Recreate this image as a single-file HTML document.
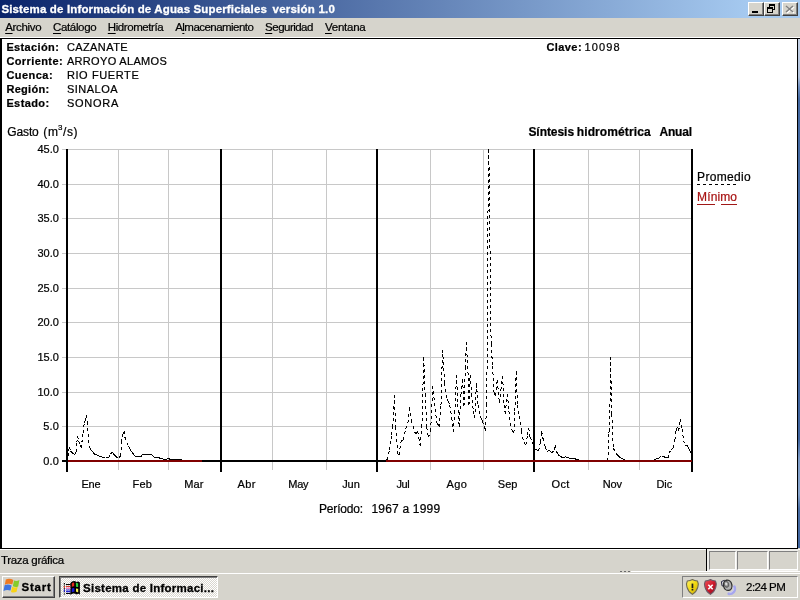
<!DOCTYPE html>
<html lang="es"><head><meta charset="utf-8"><title>Sistema de Información de Aguas Superficiales versión 1.0</title>
<style>
html,body{margin:0;padding:0;background:#d6d4cc;}
body{width:800px;height:600px;overflow:hidden;position:relative;font-family:"Liberation Sans",sans-serif;}
.tx{position:absolute;white-space:pre;line-height:1;font-size:11px;color:#000;-webkit-text-stroke:.22px currentColor;}
#txt{position:absolute;left:0;top:0;width:800px;height:600px;will-change:transform;pointer-events:none;}
.tx.ttl,.tx.tb{-webkit-text-stroke:.3px currentColor;}
.tx u{text-decoration:underline;text-underline-offset:2px;text-decoration-thickness:1px;}
#titlebar{position:absolute;left:0;top:0;width:800px;height:18px;background:linear-gradient(to right,#0a246a 0,#a6caf0 94%);}
.cb{position:absolute;top:2px;width:16px;height:14px;box-sizing:border-box;background:#d6d4cc;border:1px solid;border-color:#fff #404040 #404040 #fff;box-shadow:inset -1px -1px 0 #808080;}
#menubar{position:absolute;left:0;top:18px;width:800px;height:20px;background:#d6d4cc;border-bottom:1px solid #fff;box-sizing:border-box;}
#client{position:absolute;left:0;top:38px;width:798px;height:511px;box-sizing:border-box;background:#fff;border-style:solid;border-color:#000;border-width:1px 1px 1px 2px;}
#rstrip{position:absolute;left:798px;top:39px;width:2px;height:509px;background:linear-gradient(to bottom,#c6d2e6 0,#b0c2dc 38px,#6f8fc0 48px,#456aa2 60px,#3f649e 400px,#7d9cc8 420px,#86a4cc 455px,#4a6ea4 470px,#3f649e 509px);}
#chart{position:absolute;left:2px;top:39px;}
#statusbar{position:absolute;left:0;top:549px;width:800px;height:22px;background:#d6d4cc;border-top:1px solid #fff;box-sizing:border-box;}
.sp{position:absolute;top:551px;height:19px;box-sizing:border-box;background:#d6d4cc;border:1px solid;border-color:#808080 #fff #fff #808080;}
#taskbar{position:absolute;left:0;top:571px;width:800px;height:29px;background:#d6d4cc;}
#taskbar .hl{position:absolute;left:0;top:2px;width:800px;height:1px;background:#fff;}
#start{position:absolute;left:2px;top:576px;width:53px;height:22px;box-sizing:border-box;background:#d6d4cc;border:1px solid;border-color:#fff #404040 #404040 #fff;box-shadow:inset -1px -1px 0 #808080;}
#task{position:absolute;left:59px;top:576px;width:159px;height:22px;box-sizing:border-box;background-color:#ebe9e5;background-image:repeating-conic-gradient(#fff 0 25%,#d9d6cf 0 50%);background-size:2px 2px;border:1px solid;border-color:#404040 #fff #fff #404040;box-shadow:inset 1px 1px 0 #808080;}
#tray{position:absolute;left:682px;top:576px;width:116px;height:22px;box-sizing:border-box;border:1px solid;border-color:#808080 #fff #fff #808080;}
svg.ic{position:absolute;overflow:visible;}
</style></head>
<body>
<div id="titlebar">
<div class="cb" style="left:748px"><svg class="ic" style="left:3px;top:8px" width="6" height="2"><rect width="6" height="2" fill="#000"/></svg></div>
<div class="cb" style="left:764px"><svg class="ic" style="left:-1px;top:-1px" width="16" height="14" shape-rendering="crispEdges"><rect x="5" y="2" width="6" height="2" fill="#000"/><path d="M5.5 4V8M10.5 4V7.5H9" stroke="#000" fill="none"/><rect x="3" y="5" width="6" height="6" fill="#d6d4cc"/><rect x="3" y="5" width="6" height="2" fill="#000"/><path d="M3.5 7V10.5H8.5V7" stroke="#000" fill="none"/></svg></div>
<div class="cb" style="left:782px"><svg class="ic" style="left:2px;top:2px" width="10" height="9"><path d="M2 2L9 8M9 2L2 8" stroke="#fff" stroke-width="1.5"/><path d="M1 1L8 7M8 1L1 7" stroke="#808080" stroke-width="1.5"/></svg></div>
</div>
<div id="menubar"></div>
<div id="client"></div>
<div id="rstrip"></div>
<div style="position:absolute;left:798px;top:38px;width:2px;height:1px;background:#000"></div>
<svg id="chart" width="796" height="509" viewBox="2 39 796 509" shape-rendering="crispEdges"><path d="M62 149.5H692M62 184.5H692M62 218.5H692M62 253.5H692M62 288.5H692M62 322.5H692M62 357.5H692M62 392.5H692M62 426.5H692M118.5 149V470M168.5 149V470M272.5 149V470M326.5 149V470M430.5 149V470M483.5 149V470M588.5 149V470M639.5 149V470" stroke="#c8c8c8" stroke-width="1" fill="none"/><rect x="66" y="149" width="2" height="323" fill="#000"/><rect x="220" y="149" width="2" height="323" fill="#000"/><rect x="376" y="149" width="2" height="323" fill="#000"/><rect x="533" y="149" width="2" height="323" fill="#000"/><rect x="691" y="149" width="2" height="323" fill="#000"/><rect x="62" y="460" width="6" height="2" fill="#000"/><path d="M67.5 458.0L68.1 455.6M68.1 455.6L68.5 451.3M68.5 451.3L69.4 446.9M69.4 446.9L70.6 451.3M70.6 451.3L72.5 453.1M72.5 453.1L74.6 454.4M74.6 454.4L76.3 451.9M76.3 451.9L76.9 442.5M76.9 442.5L77.5 436.3M77.5 436.3L78.8 441.3M78.8 441.3L80.0 445.0M80.0 445.0L81.5 448.1M81.5 448.1L81.9 442.5M81.9 442.5L83.1 432.5M83.1 432.5L84.4 422.5M84.4 422.5L85.6 420.0M85.6 420.0L86.5 415.0M86.5 415.0L87.3 422.5M87.3 422.5L88.1 433.8M88.1 433.8L89.4 446.9M89.4 446.9L91.3 450.0M91.3 450.0L92.8 452.0M92.8 452.0L94.4 454.0M94.4 454.0L95.9 454.6M95.9 454.6L97.3 455.3M97.3 455.3L98.8 455.9M98.8 455.9L100.5 456.4M100.5 456.4L102.1 457.0M102.1 457.0L103.8 457.5M103.8 457.5L105.5 457.4M105.5 457.4L107.1 457.4M107.1 457.4L108.8 457.3M108.8 457.3L110.6 453.8M110.6 453.8L112.3 452.3M112.3 452.3L113.7 454.0M113.7 454.0L115.0 455.6M115.0 455.6L116.8 457.1M116.8 457.1L118.5 458.5M118.5 458.5L120.6 455.6M120.6 455.6L121.5 442.5M121.5 442.5L122.5 435.0M122.5 435.0L124.4 431.3M124.4 431.3L125.0 437.5M125.0 437.5L126.9 442.5M126.9 442.5L128.4 445.9M128.4 445.9L130.0 449.4M130.0 449.4L131.7 451.7M131.7 451.7L133.3 454.0M133.3 454.0L135.0 456.3M135.0 456.3L136.6 456.4M136.6 456.4L138.2 456.4M138.2 456.4L139.7 456.4M139.7 456.4L141.3 456.5M141.3 456.5L142.5 454.4M142.5 454.4L145.0 455.0M145.0 455.0L147.5 454.0M147.5 454.0L149.4 454.2M149.4 454.2L151.3 454.4M151.3 454.4L152.9 455.9M152.9 455.9L154.4 457.3M154.4 457.3L155.9 457.5M155.9 457.5L157.3 457.6M157.3 457.6L158.8 457.8M158.8 457.8L160.7 458.4M160.7 458.4L162.5 459.0M162.5 459.0L164.0 459.1M164.0 459.1L165.4 459.3M165.4 459.3L166.9 459.4M166.9 459.4L168.5 457.8M168.5 457.8L170.0 459.4M170.0 459.4L171.6 459.4M171.6 459.4L173.2 459.5M173.2 459.5L174.8 459.5M174.8 459.5L176.5 459.5M176.5 459.5L178.1 459.5M178.1 459.5L179.7 459.6M179.7 459.6L181.3 459.6M181.3 459.6L183.0 460.6M183.0 460.6L184.6 460.6M184.6 460.6L186.3 460.6M186.3 460.6L187.9 460.6M187.9 460.6L189.5 460.6M189.5 460.6L191.2 460.6M191.2 460.6L192.8 460.6M192.8 460.6L194.5 460.6M194.5 460.6L196.1 460.6M196.1 460.6L197.7 460.6M197.7 460.6L199.4 460.6M199.4 460.6L201.0 460.6" stroke="#000" stroke-width="1" fill="none" stroke-dasharray="3 3"/><path d="M385.5 460.6L387.3 459.5M387.3 459.5L389.5 450.4M389.5 450.4L391.6 435.2M391.6 435.2L392.7 426.6M392.7 426.6L394.5 395.2M394.5 395.2L395.5 426.6M395.5 426.6L397.7 453.6M397.7 453.6L399.2 454.7M399.2 454.7L400.7 441.7M400.7 441.7L402.1 440.6M402.1 440.6L403.5 439.6M403.5 439.6L405.7 428.7M405.7 428.7L407.9 423.3M407.9 423.3L409.4 407.1M409.4 407.1L411.1 420.1M411.1 420.1L413.3 426.6M413.3 426.6L415.5 434.2M415.5 434.2L417.6 430.9M417.6 430.9L418.9 438.5M418.9 438.5L420.2 446.1M420.2 446.1L421.9 426.6M421.9 426.6L423.7 357.3M423.7 357.3L425.2 394.1M425.2 394.1L426.7 426.6M426.7 426.6L428.4 437.4M428.4 437.4L430.6 430.9M430.6 430.9L432.8 385.5M432.8 385.5L434.5 402.8M434.5 402.8L436.7 422.3M436.7 422.3L438.0 424.5M438.0 424.5L439.3 426.6M439.3 426.6L441.0 404.9M441.0 404.9L442.5 349.7M442.5 349.7L444.7 383.3M444.7 383.3L446.8 398.4M446.8 398.4L448.2 401.6M448.2 401.6L449.7 404.9M449.7 404.9L451.8 417.9M451.8 417.9L453.3 432.0M453.3 432.0L454.8 413.0M454.8 413.0L456.6 374.6M456.6 374.6L457.8 403.8M457.8 403.8L459.2 426.6M459.2 426.6L460.9 395.0M460.9 395.0L462.6 379.0M462.6 379.0L464.0 406.0M464.0 406.0L465.3 368.1M465.3 368.1L466.3 342.5M466.3 342.5L468.0 372.5M468.0 372.5L469.0 404.9M469.0 404.9L470.1 374.6M470.1 374.6L471.6 394.1M471.6 394.1L473.4 411.4M473.4 411.4L474.9 417.9M474.9 417.9L476.4 383.3M476.4 383.3L478.1 404.9M478.1 404.9L479.9 415.8M479.9 415.8L481.2 418.5M481.2 418.5L482.5 421.2M482.5 421.2L483.9 426.0M483.9 426.0L485.3 430.9M485.3 430.9L486.8 404.9M486.8 404.9L488.4 149.5M488.4 149.5L488.8 149.5M488.8 149.5L491.1 344.3M491.1 344.3L492.6 366.0M492.6 366.0L493.9 391.9M493.9 391.9L495.5 396.3M495.5 396.3L497.2 380.0M497.2 380.0L499.4 402.8M499.4 402.8L500.9 389.8M500.9 389.8L502.6 375.7M502.6 375.7L504.1 404.9M504.1 404.9L505.2 413.6M505.2 413.6L507.4 394.1M507.4 394.1L508.9 411.4M508.9 411.4L511.0 428.7M511.0 428.7L512.5 430.9M512.5 430.9L513.9 433.1M513.9 433.1L514.9 411.4M514.9 411.4L516.2 371.4M516.2 371.4L517.5 404.9M517.5 404.9L519.3 415.8M519.3 415.8L521.4 430.9M521.4 430.9L523.6 441.7M523.6 441.7L525.8 445.0M525.8 445.0L527.5 435.2M527.5 435.2L528.6 427.7M528.6 427.7L530.1 437.4M530.1 437.4L532.3 441.7M532.3 441.7L533.8 445.5M533.8 445.5L535.4 449.3M535.4 449.3L537.0 450.1M537.0 450.1L538.7 450.8M538.7 450.8L540.4 441.7M540.4 441.7L541.5 430.9M541.5 430.9L543.0 438.5M543.0 438.5L545.2 447.1M545.2 447.1L547.3 451.5M547.3 451.5L549.5 450.4M549.5 450.4L551.6 453.0M551.6 453.0L553.8 450.4M553.8 450.4L555.3 445.0M555.3 445.0L556.4 451.5M556.4 451.5L557.8 453.6M557.8 453.6L559.2 455.8M559.2 455.8L560.9 456.6M560.9 456.6L562.5 457.5M562.5 457.5L564.1 457.2M564.1 457.2L565.7 456.9M565.7 456.9L567.1 457.5M567.1 457.5L568.6 458.0M568.6 458.0L570.0 458.6M570.0 458.6L571.8 458.7M571.8 458.7L573.7 458.9M573.7 458.9L575.5 459.0M575.5 459.0L577.3 459.5M577.3 459.5L579.1 460.1M579.1 460.1L580.9 460.6M580.9 460.6L582.6 460.6M582.6 460.6L584.3 460.6M584.3 460.6L586.0 460.6M586.0 460.6L587.6 460.6M587.6 460.6L589.3 460.6M589.3 460.6L591.0 460.6M591.0 460.6L592.7 460.6M592.7 460.6L594.4 460.6M594.4 460.6L596.1 460.6M596.1 460.6L597.8 460.6M597.8 460.6L599.5 460.6M599.5 460.6L601.1 460.6M601.1 460.6L602.8 460.6M602.8 460.6L604.5 460.6M604.5 460.6L606.2 460.6M606.2 460.6L607.9 460.6M607.9 460.6L608.5 433.1M608.5 433.1L609.7 430.9M609.7 430.9L610.5 357.3M610.5 357.3L611.8 413.6M611.8 413.6L613.3 448.2M613.3 448.2L615.5 452.6M615.5 452.6L617.1 454.6M617.1 454.6L618.7 456.5M618.7 456.5L620.4 457.6M620.4 457.6L622.0 458.6M622.0 458.6L623.5 459.3M623.5 459.3L625.1 459.9M625.1 459.9L626.6 460.6M626.6 460.6L628.3 460.6M628.3 460.6L630.0 460.6M630.0 460.6L631.8 460.6M631.8 460.6L633.5 460.6M633.5 460.6L635.2 460.6M635.2 460.6L636.9 460.6M636.9 460.6L638.6 460.6M638.6 460.6L640.4 460.6M640.4 460.6L642.1 460.6M642.1 460.6L643.8 460.6M643.8 460.6L645.5 460.6M645.5 460.6L647.2 460.6M647.2 460.6L649.0 460.6M649.0 460.6L650.7 460.6M650.7 460.6L652.4 460.6M652.4 460.6L654.5 459.6M654.5 459.6L656.5 458.6M656.5 458.6L658.7 458.0M658.7 458.0L660.1 456.9M660.1 456.9L661.5 455.8M661.5 455.8L662.8 456.4M662.8 456.4L664.1 456.9M664.1 456.9L666.0 457.4M666.0 457.4L668.0 458.0M668.0 458.0L668.9 453.6M668.9 453.6L670.6 450.4M670.6 450.4L671.9 449.3M671.9 449.3L673.2 448.2M673.2 448.2L674.9 439.6M674.9 439.6L676.0 430.9M676.0 430.9L677.5 426.6M677.5 426.6L678.8 430.9M678.8 430.9L680.3 419.0M680.3 419.0L682.1 428.7M682.1 428.7L683.6 440.6M683.6 440.6L685.3 445.0M685.3 445.0L687.5 446.0M687.5 446.0L688.8 448.8M688.8 448.8L690.1 451.5M690.1 451.5L691.8 453.6" stroke="#000" stroke-width="1" fill="none" stroke-dasharray="3 3"/><rect x="68" y="460" width="624" height="2" fill="#800000"/><rect x="202" y="460" width="184" height="2" fill="#000"/><path d="M697 184.5H737" stroke="#000" stroke-width="1" stroke-dasharray="3 3" fill="none"/><path d="M697 204.5H715M721 204.5H737" stroke="#a01818" stroke-width="1" fill="none"/></svg>
<div id="statusbar"></div>
<div style="position:absolute;left:706px;top:548px;width:1px;height:23px;background:#000"></div>
<div style="position:absolute;left:707px;top:549px;width:91px;height:22px;background:#efeeea"></div>
<div class="sp" style="left:709px;width:27px"></div>
<div class="sp" style="left:737px;width:31px"></div>
<div class="sp" style="left:769px;width:29px"></div>
<div id="taskbar"><div class="hl"></div><div style="position:absolute;left:631px;top:0;width:169px;height:1px;background:#fff"></div><div style="position:absolute;left:620px;top:0;width:2px;height:1px;background:#6a6a6a"></div><div style="position:absolute;left:624px;top:0;width:2px;height:1px;background:#6a6a6a"></div><div style="position:absolute;left:628px;top:0;width:2px;height:1px;background:#6a6a6a"></div></div>
<div id="start"></div>
<div id="task"></div>
<div id="tray"></div>

<svg class="ic" style="left:0;top:571px" width="24" height="29" viewBox="0 571 24 29"><defs><filter id="bl" x="-20%" y="-20%" width="140%" height="140%"><feGaussianBlur stdDeviation=".45"/></filter></defs><g filter="url(#bl)"><path d="M5.8 579.4Q9.5 577.8 13.4 579.9L12.3 584.6Q8.6 583 4.8 584.8Z" fill="#ee7a22"/><path d="M14 580.6Q16.6 581.8 19.4 580.1L18.2 586.4Q15.5 587.6 12.8 586.2Z" fill="#86cc2a"/><path d="M4.6 585.3Q8 583.8 11.6 585.5L10.5 590.6Q7 589.2 3.5 590.9Z" fill="#3c74e0"/><path d="M12.2 586.7Q14.9 588.1 17.7 586.7L16.6 591.8Q13.8 593.2 11 591.9Z" fill="#f8d418"/></g></svg>
<svg class="ic" style="left:63px;top:580px" width="18" height="16" viewBox="63 580 18 16"><path d="M70.3 583.2C72.2 580.6 75 580.4 76.6 582.2 77.6 581.2 78.8 581.6 79.9 582.6V594.8C78.8 593.6 77.6 593.6 76.6 594.6 75 593 72.4 593 70.3 595Z" fill="#000"/><path d="M71.8 583.4Q73 582.2 74.2 582.8V586.6Q73 586 71.8 587Z" fill="#e82a1c"/><path d="M75.9 582.6Q77 583.6 78.2 583.2V587Q77 587.4 75.9 586.4Z" fill="#2ed03c"/><path d="M71.8 588.6Q73 587.6 74.4 588.2V591.8Q73 591.4 71.8 592.2Z" fill="#1818d8"/><path d="M76 588.2Q77 589 78.2 588.8V592.2Q77 592.4 76 591.6Z" fill="#f4ee50"/><path d="M66 584.5h4.5M66 593.5h4.5" stroke="#000" stroke-width="1.2"/><path d="M66 586.5h4.5" stroke="#d84030" stroke-width="1.2"/><path d="M66 588.3h4.5" stroke="#f070c0" stroke-width="1.2"/><path d="M66 590h4.5M66 591.6h4.5" stroke="#2828d0" stroke-width="1.2"/><path d="M64.4 583v11.5" stroke="#000" stroke-width="1.2" stroke-dasharray="1.4 1.2"/><path d="M64.4 586v2" stroke="#d84030" stroke-width="1.2"/><path d="M64.4 589.4v2.4" stroke="#2828d0" stroke-width="1.2"/></svg>
<svg class="ic" style="left:685px;top:578px" width="15" height="18" viewBox="685 578 15 18"><defs><linearGradient id="gy" x1="0" y1="0" x2="1" y2="1"><stop offset="0" stop-color="#fff26a"/><stop offset=".5" stop-color="#f2d910"/><stop offset="1" stop-color="#c9a60c"/></linearGradient><linearGradient id="gr" x1="0" y1="0" x2="1" y2="1"><stop offset="0" stop-color="#f0505a"/><stop offset=".5" stop-color="#cf1a2c"/><stop offset="1" stop-color="#8e0c1c"/></linearGradient></defs><path d="M692.4 579.5C694 580.5 696 580.9 697.5 581 698.9 583.5 698.7 590.2 692.4 594.4 686.1 590.2 685.9 583.5 687.3 581 688.8 580.9 690.8 580.5 692.4 579.5Z" fill="url(#gy)" stroke="#6e6a52" stroke-width="1.1" stroke-linejoin="round"/><rect x="691.6" y="583.6" width="1.7" height="4.6" fill="#1c1c1c"/><rect x="691.6" y="589" width="1.7" height="1.5" fill="#1c1c1c"/></svg>
<svg class="ic" style="left:703px;top:578px" width="15" height="18" viewBox="703 578 15 18"><path d="M710.4 579.5C712 580.5 714 580.9 715.5 581 716.9 583.5 716.7 590.2 710.4 594.4 704.1 590.2 703.9 583.5 705.3 581 706.8 580.9 708.8 580.5 710.4 579.5Z" fill="url(#gr)" stroke="#6a5a66" stroke-width="1.1" stroke-linejoin="round"/><path d="M708.3 584.8L712.7 589.2M712.7 584.8L708.3 589.2" stroke="#fff" stroke-width="1.6"/></svg>
<svg class="ic" style="left:719px;top:578px" width="20" height="18" viewBox="719 578 20 18"><defs><radialGradient id="gs" cx=".45" cy=".4" r=".6"><stop offset="0" stop-color="#fff"/><stop offset=".5" stop-color="#a0a0a0"/><stop offset="1" stop-color="#666"/></radialGradient></defs><path d="M734.4 586.8C735.8 590.6 733 594 728.8 593.9" stroke="#a6a6ee" stroke-width="2.8" fill="none" stroke-linecap="round"/><path d="M733.4 587.4C734.4 590.2 732.4 592.6 729.4 592.8" stroke="#d0d0fa" stroke-width=".9" fill="none"/><path d="M721.4 581.6L724.4 580.3 725 586.4 722 585.8Z" fill="#d8d8e0" stroke="#2c2c44" stroke-width="1"/><ellipse cx="727.7" cy="585.3" rx="4.2" ry="5.2" fill="#b2b2b2" stroke="#303030" stroke-width="1.3" transform="rotate(-14 727.7 585.3)"/><ellipse cx="726.5" cy="584.4" rx="2.3" ry="3" fill="url(#gs)" stroke="#505050" stroke-width=".7" transform="rotate(-14 726.5 584.4)"/></svg>

<div id="txt">
<span class="tx ttl" style="left:1.40px;top:4.27px;font-size:11.5px;letter-spacing:0.147px;font-weight:bold;color:#fff;">Sistema de Información de Aguas Superficiales</span>
<span class="tx ttl" style="left:272.60px;top:4.27px;font-size:11.5px;letter-spacing:0.211px;font-weight:bold;color:#fff;">versión 1.0</span>
<span class="tx mn" style="left:5.20px;top:22.27px;font-size:11.5px;letter-spacing:-0.327px;"><u>A</u>rchivo</span>
<span class="tx mn" style="left:53.00px;top:22.27px;font-size:11.5px;letter-spacing:-0.350px;"><u>C</u>atálogo</span>
<span class="tx mn" style="left:107.80px;top:22.27px;font-size:11.5px;letter-spacing:-0.429px;"><u>H</u>idrometría</span>
<span class="tx mn" style="left:175.20px;top:22.27px;font-size:11.5px;letter-spacing:-0.536px;">A<u>l</u>macenamiento</span>
<span class="tx mn" style="left:265.10px;top:22.27px;font-size:11.5px;letter-spacing:-0.517px;"><u>S</u>eguridad</span>
<span class="tx mn" style="left:325.00px;top:22.27px;font-size:11.5px;letter-spacing:-0.256px;"><u>V</u>entana</span>
<span class="tx hd" style="left:6.40px;top:41.69px;font-size:11px;letter-spacing:0.361px;font-weight:bold;">Estación:</span>
<span class="tx hd" style="left:66.90px;top:41.69px;font-size:11px;letter-spacing:0.406px;">CAZANATE</span>
<span class="tx hd" style="left:6.40px;top:55.69px;font-size:11px;letter-spacing:0.404px;font-weight:bold;">Corriente:</span>
<span class="tx hd" style="left:66.90px;top:55.69px;font-size:11px;letter-spacing:0.326px;">ARROYO ALAMOS</span>
<span class="tx hd" style="left:6.40px;top:69.69px;font-size:11px;letter-spacing:0.466px;font-weight:bold;">Cuenca:</span>
<span class="tx hd" style="left:66.90px;top:69.69px;font-size:11px;letter-spacing:0.609px;">RIO FUERTE</span>
<span class="tx hd" style="left:6.40px;top:83.69px;font-size:11px;letter-spacing:0.291px;font-weight:bold;">Región:</span>
<span class="tx hd" style="left:66.90px;top:83.69px;font-size:11px;letter-spacing:0.502px;">SINALOA</span>
<span class="tx hd" style="left:6.40px;top:97.69px;font-size:11px;letter-spacing:0.393px;font-weight:bold;">Estado:</span>
<span class="tx hd" style="left:66.90px;top:97.69px;font-size:11px;letter-spacing:0.762px;">SONORA</span>
<span class="tx hd" style="left:546.40px;top:41.69px;font-size:11px;letter-spacing:0.434px;font-weight:bold;">Clave:</span>
<span class="tx hd" style="left:584.40px;top:41.69px;font-size:11px;letter-spacing:1.152px;">10098</span>
<span class="tx " style="left:7.20px;top:125.84px;font-size:12px;letter-spacing:-0.104px;">Gasto</span>
<span class="tx " style="left:43.20px;top:125.84px;font-size:12px;letter-spacing:0.800px;">(m</span>
<span class="tx " style="left:57.90px;top:124.23px;font-size:8px;letter-spacing:0.000px;">3</span>
<span class="tx " style="left:63.10px;top:125.84px;font-size:12px;letter-spacing:0.578px;">/s)</span>
<span class="tx " style="left:528.40px;top:125.84px;font-size:12px;letter-spacing:-0.047px;font-weight:bold;">Síntesis</span>
<span class="tx " style="left:576.80px;top:125.84px;font-size:12px;letter-spacing:0.101px;font-weight:bold;">hidrométrica</span>
<span class="tx " style="left:659.40px;top:125.84px;font-size:12px;letter-spacing:-0.161px;font-weight:bold;">Anual</span>
<span class="tx " style="left:43.20px;top:455.69px;font-size:11px;letter-spacing:0.252px;">0.0</span>
<span class="tx " style="left:43.20px;top:420.69px;font-size:11px;letter-spacing:0.252px;">5.0</span>
<span class="tx " style="left:37.40px;top:386.69px;font-size:11px;letter-spacing:0.059px;">10.0</span>
<span class="tx " style="left:37.40px;top:351.69px;font-size:11px;letter-spacing:0.059px;">15.0</span>
<span class="tx " style="left:37.40px;top:316.69px;font-size:11px;letter-spacing:0.059px;">20.0</span>
<span class="tx " style="left:37.40px;top:282.69px;font-size:11px;letter-spacing:0.059px;">25.0</span>
<span class="tx " style="left:37.40px;top:247.69px;font-size:11px;letter-spacing:0.059px;">30.0</span>
<span class="tx " style="left:37.40px;top:212.69px;font-size:11px;letter-spacing:0.059px;">35.0</span>
<span class="tx " style="left:37.40px;top:178.69px;font-size:11px;letter-spacing:0.059px;">40.0</span>
<span class="tx " style="left:37.40px;top:143.69px;font-size:11px;letter-spacing:0.059px;">45.0</span>
<span class="tx " style="left:81.40px;top:478.69px;font-size:11px;letter-spacing:-0.189px;">Ene</span>
<span class="tx " style="left:132.60px;top:478.69px;font-size:11px;letter-spacing:0.116px;">Feb</span>
<span class="tx " style="left:184.20px;top:478.69px;font-size:11px;letter-spacing:0.123px;">Mar</span>
<span class="tx " style="left:237.40px;top:478.69px;font-size:11px;letter-spacing:0.438px;">Abr</span>
<span class="tx " style="left:288.20px;top:478.69px;font-size:11px;letter-spacing:-0.191px;">May</span>
<span class="tx " style="left:342.20px;top:478.69px;font-size:11px;letter-spacing:-0.075px;">Jun</span>
<span class="tx " style="left:396.50px;top:478.69px;font-size:11px;letter-spacing:-0.381px;">Jul</span>
<span class="tx " style="left:446.40px;top:478.69px;font-size:11px;letter-spacing:0.511px;">Ago</span>
<span class="tx " style="left:497.80px;top:478.69px;font-size:11px;letter-spacing:0.011px;">Sep</span>
<span class="tx " style="left:551.40px;top:478.69px;font-size:11px;letter-spacing:0.437px;">Oct</span>
<span class="tx " style="left:602.80px;top:478.69px;font-size:11px;letter-spacing:-0.231px;">Nov</span>
<span class="tx " style="left:656.40px;top:478.69px;font-size:11px;letter-spacing:0.005px;">Dic</span>
<span class="tx " style="left:319.00px;top:502.84px;font-size:12px;letter-spacing:-0.182px;">Período:</span>
<span class="tx " style="left:371.50px;top:502.84px;font-size:12px;letter-spacing:0.187px;">1967 a 1999</span>
<span class="tx " style="left:697.10px;top:170.84px;font-size:12px;letter-spacing:0.334px;">Promedio</span>
<span class="tx " style="left:697.10px;top:190.84px;font-size:12px;letter-spacing:0.111px;color:#a81414;">Mínimo</span>
<span class="tx " style="left:0.90px;top:555.27px;font-size:11.5px;letter-spacing:-0.291px;">Traza gráfica</span>
<span class="tx tb" style="left:21.40px;top:582.27px;font-size:11.5px;letter-spacing:0.824px;font-weight:bold;">Start</span>
<span class="tx tb" style="left:83.10px;top:583.27px;font-size:11.5px;letter-spacing:0.252px;font-weight:bold;">Sistema de Informaci...</span>
<span class="tx " style="left:746.00px;top:582.27px;font-size:11.5px;letter-spacing:-0.505px;">2:24 PM</span>
</div>
</body></html>
